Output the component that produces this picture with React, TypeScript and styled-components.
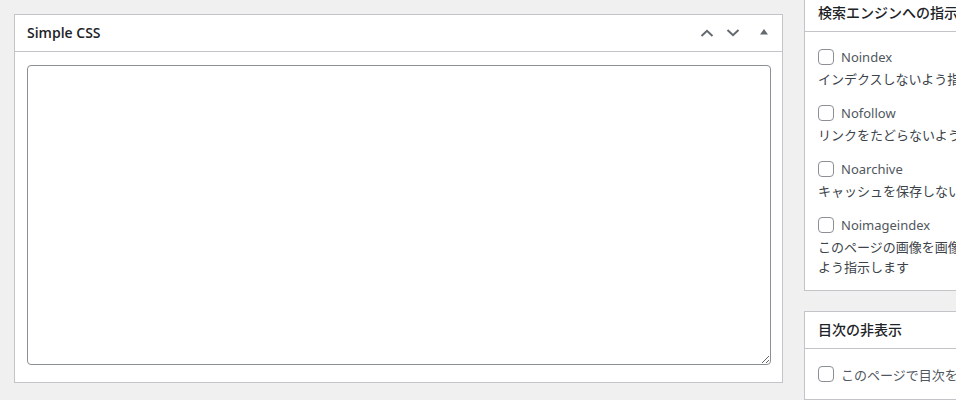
import React from 'react';
import styled, { createGlobalStyle } from 'styled-components';

const GlobalStyle = createGlobalStyle`
    body {
        margin: 0;
        background: #f0f0f1;
        font-family: "Noto Sans", "Noto Sans CJK JP", sans-serif;
        color: #3c434a;
        overflow: hidden;
    }
`;

const Page = styled.div`
    display: flex;
    align-items: flex-start;
    gap: 21px;
    padding-left: 14px;
    width: 1200px;
`;

const MainColumn = styled.div`
    width: 769px;
    flex-shrink: 0;
    padding-top: 14px;
`;

const SideColumn = styled.div`
    width: 310px;
    flex-shrink: 0;
    margin-top: -6px;
    display: flex;
    flex-direction: column;
    gap: 20px;
`;

const Postbox = styled.div`
    background: #fff;
    border: 1px solid #c3c4c7;
`;

const PostboxHeader = styled.div`
    display: flex;
    align-items: center;
    height: 36px;
    padding-left: 12px;
    border-bottom: 1px solid #c3c4c7;
`;

const BoxTitle = styled.h2<{ $cjk?: boolean }>`
    margin: 0;
    font-family: "Open Sans", "Noto Sans CJK JP", sans-serif;
    font-size: 14px;
    font-weight: ${(p) => (p.$cjk ? 500 : 600)};
    line-height: 1.4;
    color: #1d2327;
    white-space: nowrap;
    padding-left: ${(p) => (p.$cjk ? '1px' : '0')};
`;

const HandleActions = styled.div`
    margin-left: auto;
    display: flex;
    align-items: center;
    height: 100%;
`;

const HandleButton = styled.span<{ $width: number; $lift?: number }>`
    width: ${(p) => p.$width}px;
    height: 100%;
    display: flex;
    align-items: center;
    justify-content: center;
    color: #646970;
    padding-bottom: ${(p) => p.$lift ?? 0}px;
    box-sizing: border-box;
    svg {
        display: block;
    }
`;

const EditorInside = styled.div`
    padding: 13px 11px 17px 12px;
`;

const CodeArea = styled.textarea`
    display: block;
    width: 100%;
    height: 300px;
    box-sizing: border-box;
    border: 1px solid #8c8f94;
    border-radius: 4px;
    background: #fff;
    resize: vertical;
    margin: 0;
    font-family: "Liberation Mono", monospace;
    font-size: 13px;
`;

const SideInside = styled.div`
    padding: 13px;
`;

const Option = styled.div`
    margin-bottom: 12px;
    &:last-child {
        margin-bottom: 0;
    }
`;

const OptionRow = styled.label`
    display: flex;
    align-items: center;
    height: 24px;
    font-size: 13px;
    color: #50575e;
    white-space: nowrap;
`;

const Checkbox = styled.input.attrs({ type: 'checkbox' })`
    appearance: none;
    width: 16px;
    height: 16px;
    margin: 0 7px 0 0;
    border: 1px solid #8c8f94;
    border-radius: 4px;
    background: #fff;
    flex-shrink: 0;
`;

const OptionNote = styled.p`
    margin: 0;
    font-size: 13px;
    line-height: 20px;
    color: #3c434a;
`;

const ChevronUp = () => (
    <svg width="14" height="8" viewBox="0 0 14 8">
        <path d="M1.5 7 L7 1.8 L12.5 7" fill="none" stroke="currentColor" strokeWidth="2" />
    </svg>
);

const ChevronDown = () => (
    <svg width="14" height="8" viewBox="0 0 14 8">
        <path d="M1.5 1 L7 6.2 L12.5 1" fill="none" stroke="currentColor" strokeWidth="2" />
    </svg>
);

const Triangle = () => (
    <svg width="8" height="6" viewBox="0 0 8 6">
        <path d="M4 0 L8 5.5 L0 5.5 Z" fill="currentColor" />
    </svg>
);

const robotsOptions = [
    { label: 'Noindex', note: 'インデクスしないよう指示します' },
    { label: 'Nofollow', note: 'リンクをたどらないよう指示します' },
    { label: 'Noarchive', note: 'キャッシュを保存しないよう指示します' },
    { label: 'Noimageindex', note: 'このページの画像を画像検索結果に表示しないよう指示します' },
];

const App = () => {
    return (
        <>
            <GlobalStyle />
            <Page>
                <MainColumn>
                    <Postbox>
                        <PostboxHeader>
                            <BoxTitle>Simple CSS</BoxTitle>
                            <HandleActions>
                                <HandleButton $width={26}>
                                    <ChevronUp />
                                </HandleButton>
                                <HandleButton $width={26}>
                                    <ChevronDown />
                                </HandleButton>
                                <HandleButton $width={36} $lift={2}>
                                    <Triangle />
                                </HandleButton>
                            </HandleActions>
                        </PostboxHeader>
                        <EditorInside>
                            <CodeArea defaultValue="" />
                        </EditorInside>
                    </Postbox>
                </MainColumn>

                <SideColumn>
                    <Postbox>
                        <PostboxHeader>
                            <BoxTitle $cjk>検索エンジンへの指示</BoxTitle>
                        </PostboxHeader>
                        <SideInside>
                            {robotsOptions.map((o) => (
                                <Option key={o.label}>
                                    <OptionRow>
                                        <Checkbox />
                                        {o.label}
                                    </OptionRow>
                                    <OptionNote>{o.note}</OptionNote>
                                </Option>
                            ))}
                        </SideInside>
                    </Postbox>

                    <Postbox>
                        <PostboxHeader>
                            <BoxTitle $cjk>目次の非表示</BoxTitle>
                        </PostboxHeader>
                        <SideInside>
                            <Option>
                                <OptionRow>
                                    <Checkbox />
                                    このページで目次を非表示にする
                                </OptionRow>
                            </Option>
                        </SideInside>
                    </Postbox>
                </SideColumn>
            </Page>
        </>
    );
};

export default App;
